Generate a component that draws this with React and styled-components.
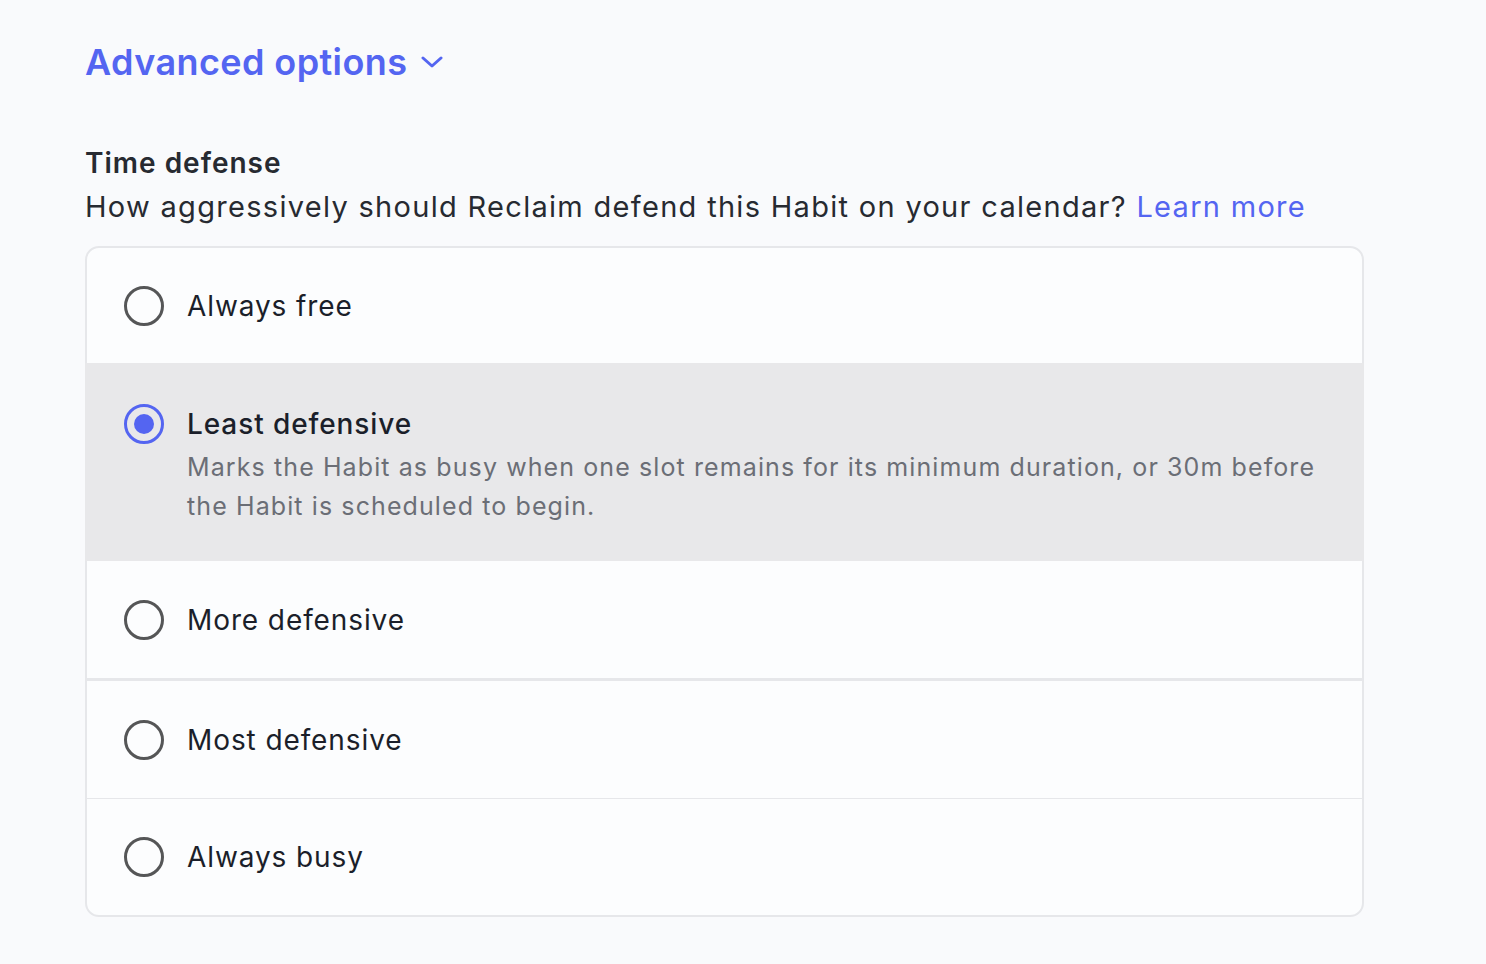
import styled, { createGlobalStyle } from "styled-components";

const GlobalStyle = createGlobalStyle`
  html, body {
    margin: 0;
    padding: 0;
    background: #f9fafc;
  }
  body {
    font-family: "Inter", "Noto Sans", sans-serif;
    color: #1b1f2a;
  }
`;

const options = [
  { id: "free", label: "Always free" },
  {
    id: "least",
    label: "Least defensive",
    desc: "Marks the Habit as busy when one slot remains for its minimum duration, or 30m before the Habit is scheduled to begin.",
  },
  { id: "more", label: "More defensive", thick: true },
  { id: "most", label: "Most defensive" },
  { id: "busy", label: "Always busy" },
];

export default function App() {
  const selected = "least";
  return (
    <Page>
      <GlobalStyle />
      <Toggle>
        Advanced options
        <svg width="22" height="12" viewBox="0 0 22 12" fill="none">
          <path d="M2 2l9 8 9-8" stroke="#5465f1" strokeWidth="3" strokeLinecap="round" strokeLinejoin="round" />
        </svg>
      </Toggle>

      <Section>
        <Title>Time defense</Title>
        <Help>
          How aggressively should Reclaim defend this Habit on your calendar? <Link href="#">Learn more</Link>
        </Help>

        <Card>
          {options.map((o, i) => {
            const active = o.id === selected;
            const next = options[i + 1];
            const divider = !next || active || next.id === selected ? 0 : o.thick ? 3 : 1;
            return (
              <Row key={o.id} $active={active} $divider={divider}>
                <Radio $active={active} />
                <Body>
                  <Label $active={active}>{o.label}</Label>
                  {active && o.desc && <Desc>{o.desc}</Desc>}
                </Body>
              </Row>
            );
          })}
        </Card>
      </Section>
    </Page>
  );
}

const Page = styled.div`
  padding: 38px 122px 40px 85px;
`;

const Toggle = styled.button`
  display: flex;
  align-items: center;
  gap: 14px;
  padding: 0;
  border: none;
  background: none;
  font-family: inherit;
  font-size: 36px;
  font-weight: 600;
  letter-spacing: 0.4px;
  line-height: 48px;
  color: #5465f1;
  cursor: pointer;
`;

const Section = styled.div`
  margin-top: 57px;
`;

const Title = styled.h3`
  margin: 0;
  font-size: 28px;
  font-weight: 600;
  letter-spacing: 1px;
  line-height: 40px;
  color: #272a31;
`;

const Help = styled.p`
  margin: 4px 0 0;
  font-size: 29px;
  letter-spacing: 1.3px;
  line-height: 40px;
  color: #272a31;
`;

const Link = styled.a`
  color: #5465f1;
  text-decoration: none;
`;

const Card = styled.div`
  margin-top: 19px;
  width: 1275px;
  border: 2px solid #e6e7ea;
  border-radius: 14px;
  background: #fcfdfe;
`;

const Row = styled.div`
  display: flex;
  align-items: ${(p) => (p.$active ? "flex-start" : "center")};
  gap: 23px;
  min-height: 117px;
  box-sizing: content-box;
  padding: 0 37px;
  background: ${(p) => (p.$active ? "#e8e8ea" : "transparent")};
  border-bottom: ${(p) => p.$divider}px solid #e6e7ea;
  &:first-child {
    min-height: 115px;
  }
  &:last-child {
    min-height: 116px;
  }
  ${(p) =>
    p.$active &&
    `
    min-height: 0;
    margin: 0 -2px;
    padding: 41px 38px 35px 39px;
  `}
`;

const Radio = styled.span`
  flex: none;
  position: relative;
  width: 40px;
  height: 40px;
  box-sizing: border-box;
  border-radius: 50%;
  border: 3px solid ${(p) => (p.$active ? "#5465f1" : "#555657")};
  &::after {
    content: "";
    display: ${(p) => (p.$active ? "block" : "none")};
    position: absolute;
    inset: 7px;
    border-radius: 50%;
    background: #5465f1;
  }
`;

const Body = styled.div`
  display: flex;
  flex-direction: column;
  gap: 4px;
`;

const Label = styled.span`
  font-size: 28px;
  font-weight: ${(p) => (p.$active ? 500 : 400)};
  letter-spacing: 0.9px;
  line-height: 40px;
  color: #1b1f2a;
`;

const Desc = styled.span`
  font-size: 25px;
  letter-spacing: 1.1px;
  line-height: 39px;
  color: #6b6e76;
`;
